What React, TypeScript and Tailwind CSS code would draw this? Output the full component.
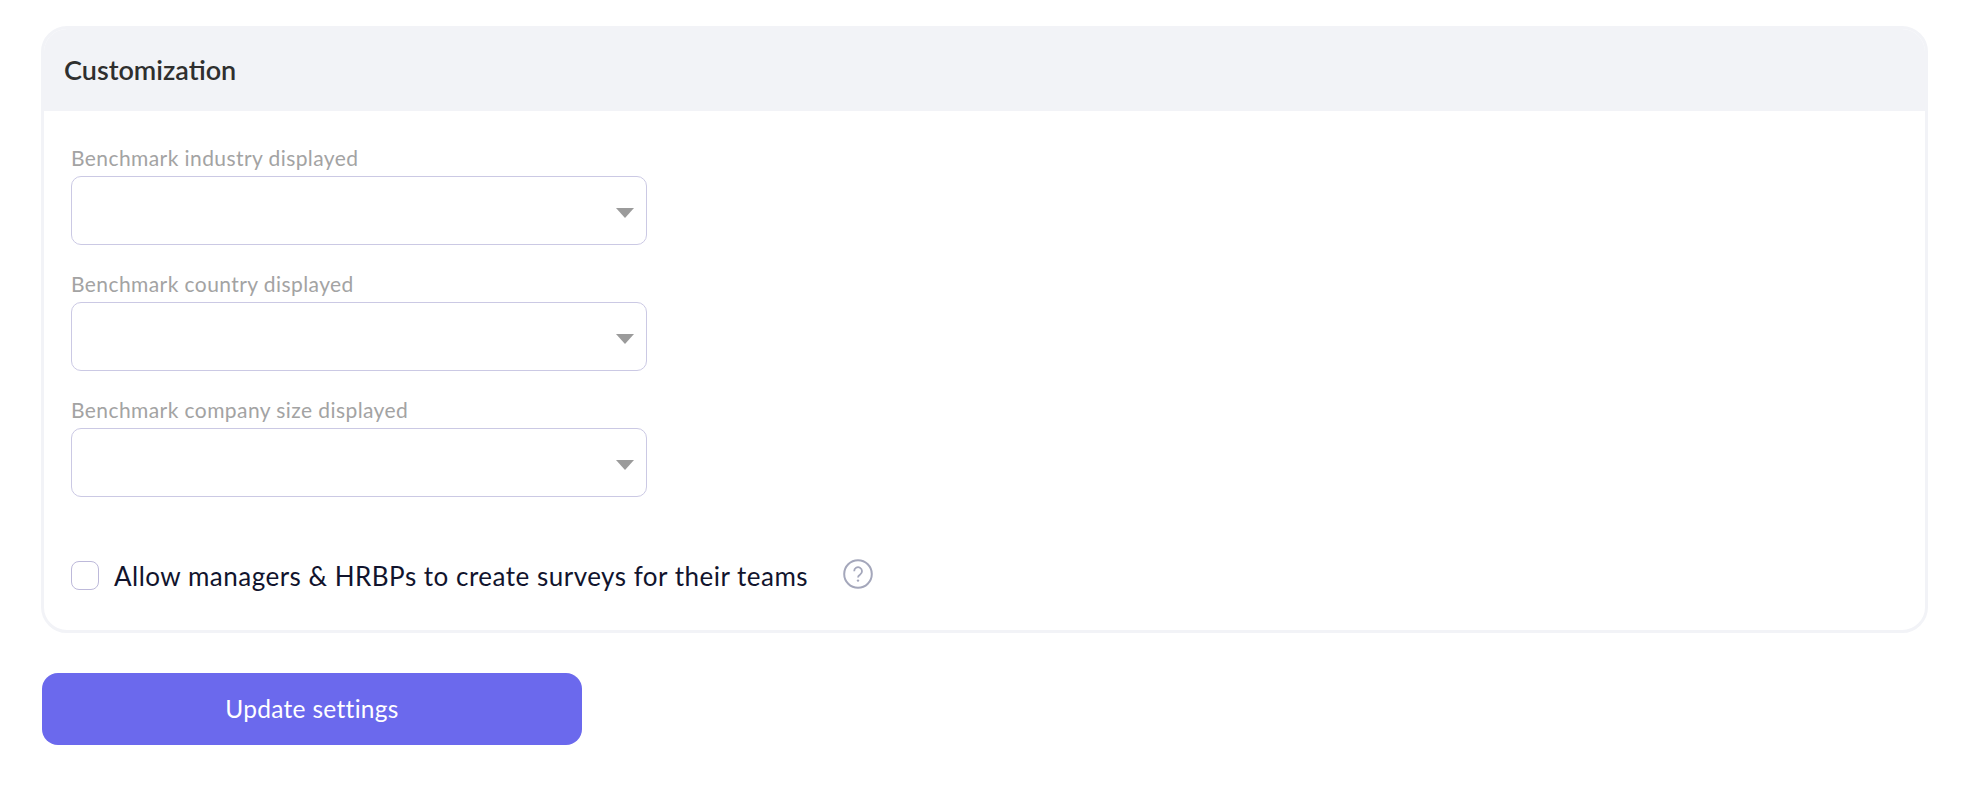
import React from 'react';

const labels = [
  'Benchmark industry displayed',
  'Benchmark country displayed',
  'Benchmark company size displayed',
];

const SelectField: React.FC<{ label: string }> = ({ label }) => (
  <div className="mb-[27px]">
    <label className="block h-[30px] text-[21px] leading-[23px] tracking-[0.42px] text-[#a3a3a3]">{label}</label>
    <div className="flex h-[69px] w-[576px] items-center justify-end rounded-[10px] border border-[#cbc9e4] bg-white pr-[12px]">
      <svg width="18" height="10" viewBox="0 0 18 10" className="mt-[5px]">
        <path d="M0 0h18L9 10z" fill="#9b9b9b" />
      </svg>
    </div>
  </div>
);

export default function App() {
  return (
    <div className="h-[786px] bg-white pl-[41px] pr-[46px] pt-[26px] font-['Lato',sans-serif]">
      <div className="overflow-hidden rounded-[26px] border-[3px] border-[#f2f3f7] bg-white">
        <div className="flex h-[82px] items-center bg-[#f2f3f7] pb-[2px] pl-[20px]">
          <h2 className="text-[27px] font-semibold leading-none text-[#2f2f2f]">Customization</h2>
        </div>
        <div className="px-[27px] pt-[35px]">
          {labels.map((label) => (
            <SelectField key={label} label={label} />
          ))}
          <div className="mt-[63px] flex items-center pb-[39px]">
            <span className="h-[29px] w-[28px] rounded-[8px] border border-[#bdb9da] bg-white" />
            <span className="ml-[15px] mt-[2px] text-[26px] leading-[29px] tracking-[0.5px] text-[#11142d]">
              Allow managers &amp; HRBPs to create surveys for their teams
            </span>
            <svg width="30" height="30" viewBox="0 0 30 30" className="ml-[35px] -mt-[3px]">
              <circle cx="15" cy="15" r="13.8" fill="none" stroke="#a4a7bb" strokeWidth="2" />
              <path
                d="M11.2 12.2a3.9 3.9 0 1 1 6 3.2c-1.400.9-2.200 1.500-2.200 3"
                fill="none"
                stroke="#a4a7bb"
                strokeWidth="1.800"
              />
              <circle cx="15" cy="21.600" r="1.200" fill="#a4a7bb" />
            </svg>
          </div>
        </div>
      </div>
      <button className="ml-px mt-[40px] flex h-[72px] w-[540px] items-center justify-center rounded-[16px] bg-[#6b69ed] text-[24.500px] tracking-[0.3px] text-white">
        Update settings
      </button>
    </div>
  );
}
